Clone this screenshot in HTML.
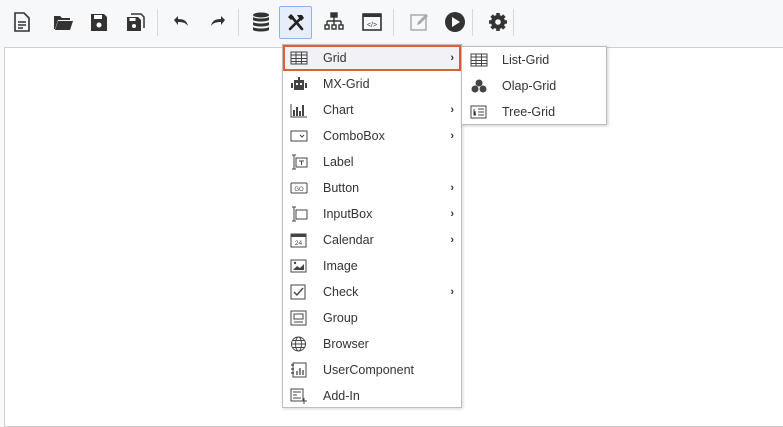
<!DOCTYPE html>
<html><head><meta charset="utf-8"><style>
*{margin:0;padding:0;box-sizing:border-box}
body{width:783px;height:416px;background:#f7f8fa;position:relative;overflow:hidden;font-family:"Liberation Sans",sans-serif;font-size:12.5px;color:#333}
.content{position:absolute;left:4px;top:47px;width:790px;height:380px;background:#fff;border:1px solid #cfcfcf}
.ic{position:absolute;top:11px}
.sep{position:absolute;top:9px;width:1px;height:27px;background:#d8d8d8}
.act{position:absolute;left:279px;top:6px;width:33px;height:33px;background:#e6eefc;border:1px solid #8fb2ee;border-radius:2px}
.menu{position:absolute;left:282px;top:44px;width:180px;height:364px;background:#fff;border:1px solid #bdbdbd;box-shadow:1px 1px 3px rgba(0,0,0,.15)}
.sub{position:absolute;left:461px;top:46px;width:146px;height:79px;background:#fff;border:1px solid #bdbdbd;box-shadow:1px 1px 3px rgba(0,0,0,.2)}
.it{position:absolute;left:0;width:178px;height:26px;line-height:26px}
.it span{position:absolute;left:40px}
.it svg{position:absolute;left:7px;top:5px}
.it b{position:absolute;right:7px;font-weight:bold;font-size:11px}
.hl{background:#f1f1f6;outline:2px solid #d9603b;outline-offset:-2px}
.sit{position:absolute;left:0;width:144px;height:26px;line-height:26px}
.sit span{position:absolute;left:40px}
.sit svg{position:absolute;left:8px;top:5px}
</style></head><body>
<div class="content"></div>
<div class="act"></div>
<svg class="ic" style="left:12px" width="20" height="22" viewBox="0 0 20 22"><path d="M3 2h9l5 5v13H3z" fill="none" stroke="#333" stroke-width="1.6"/><path d="M6 11h8M6 14h8M6 17h5" stroke="#333" stroke-width="1.4"/></svg>
<svg class="ic" style="left:52px" width="22" height="22" viewBox="0 0 22 22"><path d="M2 5h6l2 2h8v2H6L3 18H2z M6 10h15l-3 9H3z" fill="#333"/></svg>
<svg class="ic" style="left:89px" width="20" height="22" viewBox="0 0 20 22"><path d="M2 3h13l3 3v14H2z" fill="#333"/><rect x="5" y="4" width="8" height="4" fill="#fff"/><circle cx="10" cy="14" r="2.5" fill="#fff"/></svg>
<svg class="ic" style="left:125px" width="22" height="22" viewBox="0 0 22 22"><path d="M2 6h11l3 3v11H2z" fill="#333"/><rect x="4.5" y="7" width="6" height="3" fill="#fff"/><circle cx="9" cy="15" r="2" fill="#fff"/><path d="M6 3h10l3 3v11" fill="none" stroke="#333" stroke-width="1.5"/></svg>
<div class="sep" style="left:157px"></div>
<svg class="ic" style="left:170px" width="22" height="22" viewBox="0 0 22 22"><path d="M4 9l4-4v3c6 0 9 2 10 7-2-3-5-4-10-4v3z" fill="#333"/></svg>
<svg class="ic" style="left:207px" width="22" height="22" viewBox="0 0 22 22"><path d="M18 9l-4-4v3C8 8 5 10 4 15c2-3 5-4 10-4v3z" fill="#333"/></svg>
<div class="sep" style="left:238px"></div>
<svg class="ic" style="left:251px" width="20" height="22" viewBox="0 0 20 22"><g fill="#333"><ellipse cx="10" cy="4" rx="8" ry="2.5"/><path d="M2 6c2 2 14 2 16 0v3c-2 2-14 2-16 0z M2 11c2 2 14 2 16 0v3c-2 2-14 2-16 0z M2 16c2 2 14 2 16 0v3c-2 2-14 2-16 0z"/></g></svg>
<svg class="ic" style="left:285px" width="22" height="22" viewBox="0 0 22 22"><g stroke="#222" stroke-width="2.6" stroke-linecap="round"><path d="M5 18L15 8M6 5l11 13"/></g><path d="M12 4l5 0 2 3-3 3z M3 6l3-3 3 3-3 3z" fill="#222"/></svg>
<svg class="ic" style="left:323px" width="22" height="22" viewBox="0 0 22 22"><g fill="none" stroke="#333" stroke-width="1.4"><rect x="8" y="2" width="6" height="4" fill="#333"/><path d="M11 6v4M4 10h14M4 10v4M11 10v4M18 10v4"/><rect x="2" y="14" width="4" height="4"/><rect x="9" y="14" width="4" height="4"/><rect x="16" y="14" width="4" height="4"/></g></svg>
<svg class="ic" style="left:361px" width="22" height="22" viewBox="0 0 22 22"><rect x="2" y="3" width="18" height="16" fill="none" stroke="#333" stroke-width="1.6"/><rect x="2" y="3" width="18" height="3" fill="#333"/><text x="11" y="16" font-size="7" text-anchor="middle" fill="#333" font-family="Liberation Sans">&lt;/&gt;</text></svg>
<div class="sep" style="left:393px"></div>
<svg class="ic" style="left:408px" width="22" height="22" viewBox="0 0 22 22"><rect x="3" y="4" width="15" height="15" fill="none" stroke="#aaa" stroke-width="1.5"/><path d="M9 14l1-3 8-8 2 2-8 8z" fill="#aaa"/></svg>
<svg class="ic" style="left:444px" width="22" height="22" viewBox="0 0 22 22"><circle cx="11" cy="11" r="10" fill="#333"/><path d="M8 6l8 5-8 5z" fill="#fff"/></svg>
<div class="sep" style="left:472px"></div>
<svg class="ic" style="left:487px" width="22" height="22" viewBox="0 0 22 22"><g fill="#333"><circle cx="11" cy="11" r="7"/><g stroke="#333" stroke-width="3.5"><path d="M11 2v18M2 11h18M4.6 4.6l12.8 12.8M17.4 4.6L4.6 17.4"/></g></g><circle cx="11" cy="11" r="2.8" fill="#f7f8fa"/></svg>
<div class="sep" style="left:513px"></div>

<div class="menu">
<div class="it hl" style="top:0"><svg width="18" height="16"><rect x="1" y="2" width="16" height="12" fill="none" stroke="#444"/><path d="M1 5h16M1 8.5h16M1 11.5h16M6 2v12M11.5 2v12" stroke="#444"/></svg><span>Grid</span><b>›</b></div>
<div class="it" style="top:26px"><svg width="18" height="16"><rect x="4" y="4" width="10" height="10" fill="#444"/><rect x="1" y="7" width="2" height="5" fill="#444"/><rect x="15" y="7" width="2" height="5" fill="#444"/><rect x="8" y="1" width="2" height="3" fill="#444"/><rect x="6" y="7" width="2" height="2" fill="#fff"/><rect x="10" y="7" width="2" height="2" fill="#fff"/></svg><span>MX-Grid</span></div>
<div class="it" style="top:52px"><svg width="18" height="16"><path d="M1 2v13h16" fill="none" stroke="#444"/><path d="M4 8v6M7 5v9M10 9v5M13 3v11" stroke="#444" stroke-width="2"/></svg><span>Chart</span><b>›</b></div>
<div class="it" style="top:78px"><svg width="18" height="16"><rect x="1" y="3" width="16" height="10" fill="none" stroke="#444"/><path d="M10 7l2 2 2-2" fill="none" stroke="#444"/></svg><span>ComboBox</span><b>›</b></div>
<div class="it" style="top:104px"><svg width="18" height="16"><path d="M2 1h4M2 15h4M4 1v14" stroke="#444"/><rect x="6" y="4" width="11" height="9" fill="none" stroke="#444"/><path d="M9 7h5M11.5 7v4" stroke="#444"/></svg><span>Label</span></div>
<div class="it" style="top:130px"><svg width="18" height="16"><rect x="1" y="3" width="16" height="10" rx="1" fill="none" stroke="#444"/><text x="9" y="11" font-size="6" text-anchor="middle" fill="#444" font-family="Liberation Sans">GO</text></svg><span>Button</span><b>›</b></div>
<div class="it" style="top:156px"><svg width="18" height="16"><path d="M2 1h4M2 15h4M4 1v14" stroke="#444"/><rect x="6" y="4" width="11" height="9" fill="none" stroke="#444"/></svg><span>InputBox</span><b>›</b></div>
<div class="it" style="top:182px"><svg width="18" height="16"><rect x="1" y="2" width="15" height="13" fill="none" stroke="#444"/><rect x="1" y="2" width="15" height="3" fill="#444"/><text x="8.5" y="13" font-size="6.5" text-anchor="middle" fill="#444" font-family="Liberation Sans">24</text></svg><span>Calendar</span><b>›</b></div>
<div class="it" style="top:208px"><svg width="18" height="16"><rect x="1" y="2" width="15" height="12" fill="none" stroke="#444"/><path d="M3 12l4-4 3 2 4-4v6z" fill="#444"/><circle cx="5" cy="5" r="1.2" fill="#444"/></svg><span>Image</span></div>
<div class="it" style="top:234px"><svg width="18" height="16"><rect x="1" y="1" width="14" height="14" fill="none" stroke="#444"/><path d="M4 8l3 3 6-7" fill="none" stroke="#444" stroke-width="1.4"/></svg><span>Check</span><b>›</b></div>
<div class="it" style="top:260px"><svg width="18" height="16"><rect x="1" y="1" width="15" height="14" fill="none" stroke="#444"/><rect x="4" y="4" width="9" height="5" fill="none" stroke="#444"/><path d="M4 12h9" stroke="#444"/></svg><span>Group</span></div>
<div class="it" style="top:286px"><svg width="18" height="16"><circle cx="8.5" cy="8" r="7" fill="none" stroke="#444"/><ellipse cx="8.5" cy="8" rx="3" ry="7" fill="none" stroke="#444"/><path d="M1.5 8h14M3 4.5h11M3 11.5h11" stroke="#444"/></svg><span>Browser</span></div>
<div class="it" style="top:312px"><svg width="18" height="16"><rect x="3" y="1" width="13" height="14" fill="none" stroke="#444"/><path d="M1 3h3M1 7h3M1 11h3M7 9v4M10 6v7M13 8v5" stroke="#444" stroke-width="1.3"/></svg><span>UserComponent</span></div>
<div class="it" style="top:338px"><svg width="18" height="16"><rect x="1" y="1" width="12" height="12" fill="none" stroke="#444"/><path d="M3 4h8M3 7h4M3 10h8M14 10v6M11 13h6" stroke="#444"/></svg><span>Add-In</span></div>
</div>

<div class="sub">
<div class="sit" style="top:0"><svg width="18" height="16"><rect x="1" y="2" width="16" height="12" fill="none" stroke="#444"/><path d="M1 5h16M1 8.5h16M1 11.5h16M6 2v12M11.5 2v12" stroke="#444"/></svg><span>List-Grid</span></div>
<div class="sit" style="top:26px"><svg width="18" height="16"><g fill="#444"><circle cx="9" cy="5" r="3.5"/><circle cx="5" cy="11" r="3.5"/><circle cx="13" cy="11" r="3.5"/></g></svg><span>Olap-Grid</span></div>
<div class="sit" style="top:52px"><svg width="18" height="16"><rect x="1" y="2" width="15" height="12" fill="none" stroke="#444"/><path d="M4 5v6h2M4 8h2M8 5h6M8 8h6M8 11h6" stroke="#444"/></svg><span>Tree-Grid</span></div>
</div>
</body></html>
